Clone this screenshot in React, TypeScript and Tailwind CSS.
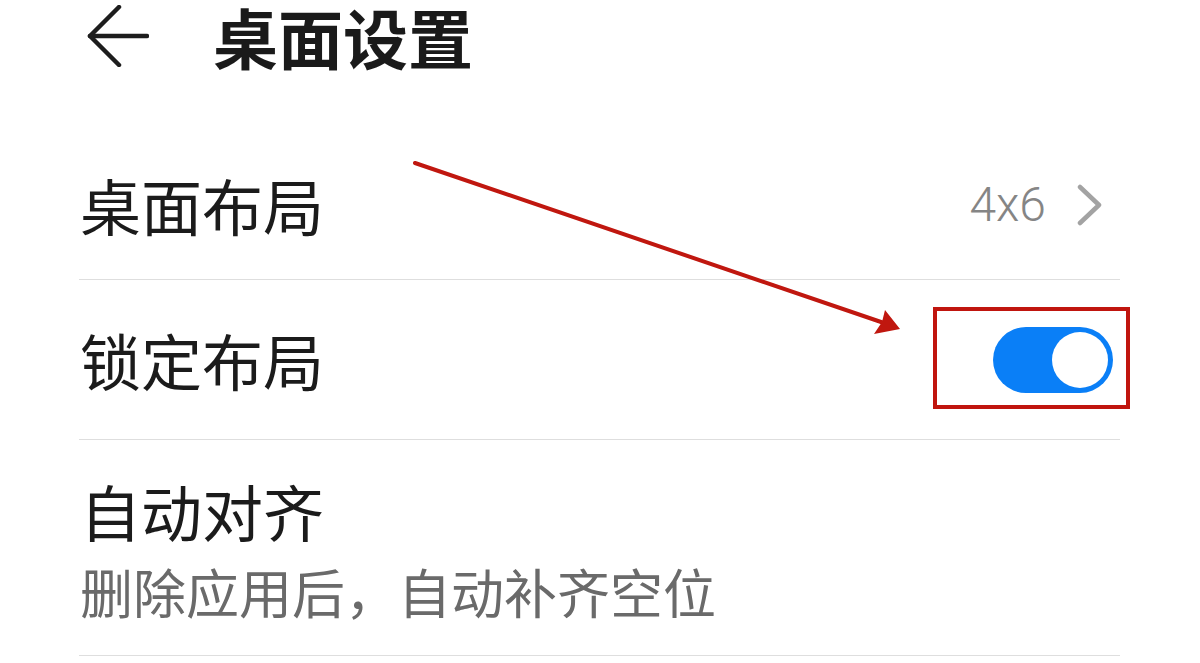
import { ReactNode } from "react";

const Divider = () => <div className="ml-[79px] mr-[80px] h-px bg-[#dedede]" />;

const Row = ({ label, right, className }: { label: string; right?: ReactNode; className: string }) => (
  <div className={`flex items-center ml-[80px] mr-[80px] ${className}`}>
    <span className="text-[61px] leading-[72px] text-[#1b1b1b]">{label}</span>
    <div className="ml-auto flex items-center">{right}</div>
  </div>
);

const Toggle = () => (
  <div className="w-[120px] h-[66px] rounded-full bg-[#0a7ff7] flex items-center justify-end pr-[5px] mr-[7px]">
    <div className="w-[56px] h-[56px] rounded-full bg-white" />
  </div>
);

export default function App() {
  return (
    <div className="relative w-[1200px] h-[663px] overflow-hidden bg-white font-['Noto_Sans_CJK_SC','Noto_Sans',sans-serif]">
      {/* header */}
      <header className="flex items-center h-[72px] pl-[87px]">
        <svg width="62" height="62" viewBox="0 0 62 62" fill="none" stroke="#1d1d1d" strokeWidth="4.5" strokeLinecap="round" strokeLinejoin="round">
          <path d="M60 31H3" />
          <path d="M32 2L3 31l29 29" />
        </svg>
        <h1 className="ml-[64px] text-[65px] leading-[72px] font-bold text-[#1a1a1a]">桌面设置</h1>
      </header>

      {/* list */}
      <Row
        label="桌面布局"
        className="h-[207px] pt-[58px]"
        right={
          <>
            <span className="font-['Roboto',sans-serif] font-light text-[48px] leading-none text-[#858585]">4x6</span>
            <svg className="ml-[30px] mr-[16px]" width="28" height="42" viewBox="0 0 28 42" fill="none" stroke="#a3a3a3" strokeWidth="4.5" strokeLinecap="round" strokeLinejoin="round">
              <path d="M4 3l19 18L4 39" />
            </svg>
          </>
        }
      />
      <Divider />
      <Row label="锁定布局" className="h-[159px]" right={<Toggle />} />
      <Divider />
      <div className="ml-[80px] pt-[35px] h-[215px]">
        <div className="text-[61px] leading-[72px] text-[#1b1b1b]">自动对齐</div>
        <div className="mt-[13px] text-[53px] leading-[62px] text-[#6a6a6a]">删除应用后，自动补齐空位</div>
      </div>
      <Divider />

      {/* annotation */}
      <div className="absolute left-[933px] top-[307px] w-[197px] h-[102px] border-4 border-[#c0150e]" />
      <svg className="absolute left-0 top-0 pointer-events-none" width="1200" height="663" viewBox="0 0 1200 663">
        <line x1="415" y1="163" x2="884" y2="323" stroke="#c0170f" strokeWidth="4" strokeLinecap="round" />
        <polygon points="900,329 885,310 882,322 874,334" fill="#c0170f" />
      </svg>
    </div>
  );
}
